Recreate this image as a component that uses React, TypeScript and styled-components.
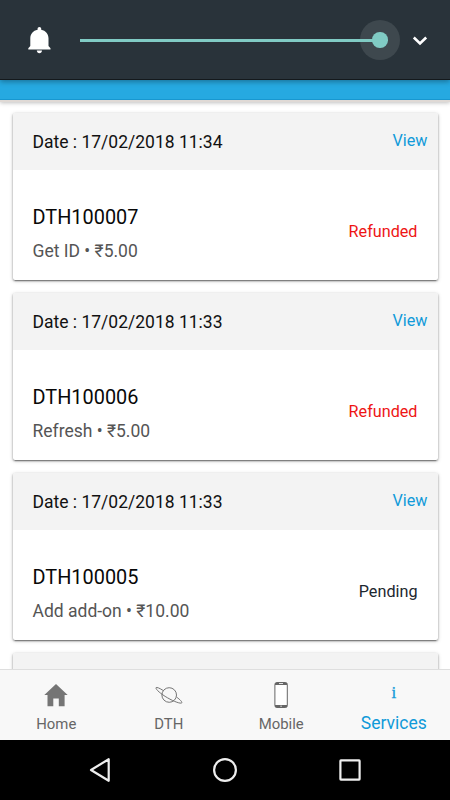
import React from "react";
import styled, { createGlobalStyle } from "styled-components";

const GlobalStyle = createGlobalStyle`
  * { box-sizing: border-box; }
  body { margin: 0; font-family: Roboto, "Noto Sans", sans-serif; background: #fff; }
`;

const Screen = styled.div`
  width: 450px;
  height: 800px;
  display: flex;
  flex-direction: column;
  overflow: hidden;
  background: #fff;
`;

const VolumePanel = styled.div`
  flex: none;
  height: 80px;
  display: flex;
  align-items: center;
  padding-left: 28px;
  background: #29333a;
  border-bottom: 1px solid #14191c;
  box-shadow: 0 2px 5px rgba(0, 0, 0, 0.3);
  z-index: 2;
`;

const BellIcon = styled.svg`
  width: 23px;
  height: 27px;
  margin: 1px 29px 0 0;
`;

const Slider = styled.div`
  display: flex;
  align-items: center;
  width: 320px;
  height: 40px;
  margin-top: 1px;
`;

const Track = styled.div`
  flex: 1;
  height: 3px;
  margin-right: -20px;
  background: #80cbc4;
  z-index: 1;
`;

const Halo = styled.div`
  display: flex;
  align-items: center;
  justify-content: center;
  width: 40px;
  height: 40px;
  border-radius: 50%;
  background: #3e484e;
`;

const Thumb = styled.div`
  width: 15.5px;
  height: 15.5px;
  border-radius: 50%;
  background: #80cbc4;
`;

const ChevronIcon = styled.svg`
  width: 16px;
  height: 12px;
  margin: 3px 0 0 12px;
`;

const AppBar = styled.div`
  flex: none;
  height: 20px;
  background: #26a9e1;
  border-bottom: 1px solid #1897d0;
  box-shadow: 0 2px 0 #dfd9d5, 0 3px 4px rgba(0, 0, 0, 0.25);
  z-index: 1;
`;

const List = styled.main`
  flex: 1;
  min-height: 0;
  overflow: hidden;
  display: flex;
  flex-direction: column;
  gap: 13px;
  padding: 13px 12.5px 0 12.5px;
`;

const Card = styled.article`
  flex: none;
  height: 167px;
  border-radius: 2px;
  background: #fff;
  box-shadow: 0 3px 1px -2px rgba(0, 0, 0, 0.2), 0 1px 2px rgba(0, 0, 0, 0.4),
    0 1px 4px 0 rgba(0, 0, 0, 0.18);
`;

const CardHeader = styled.header`
  display: flex;
  justify-content: space-between;
  height: 57px;
  padding: 0 10px 0 20px;
  line-height: 58px;
  border-radius: 2px 2px 0 0;
  background: #f3f3f3;
`;

const DateText = styled.span`
  font-size: 17.5px;
  color: #111;
`;

const ViewLink = styled.span`
  font-size: 16.2px;
  line-height: 56px;
  color: #109ad9;
`;

const CardBody = styled.div`
  display: flex;
  justify-content: space-between;
  padding: 33px 20px 0 20px;
`;

const OrderId = styled.div`
  font-size: 19.9px;
  line-height: 29px;
  color: #080808;
`;

const Detail = styled.div`
  margin-top: 5px;
  font-size: 17.5px;
  line-height: 28px;
  color: #555;
`;

const Status = styled.div<{ $color: string }>`
  margin-top: 15px;
  font-size: 16.2px;
  line-height: 28px;
  color: ${({ $color }) => $color};
`;

const TabBar = styled.nav`
  flex: none;
  display: grid;
  grid-template-columns: repeat(4, 1fr);
  height: 71px;
  border-top: 1px solid #dedede;
  background: #f8f8f8;
`;

const Tab = styled.div<{ $active?: boolean }>`
  display: flex;
  flex-direction: column;
  align-items: center;
  padding-top: 10px;
  font-size: ${({ $active }) => ($active ? 17.5 : 14.9)}px;
  line-height: 28px;
  color: ${({ $active }) => ($active ? "#109ad9" : "#666")};
`;

const TabIcon = styled.svg`
  width: 30px;
  height: 30px;
`;

const InfoGlyph = styled.div`
  height: 29px;
  font: 17px/26px "Liberation Serif", serif;
  -webkit-text-stroke: 0.3px currentColor;
`;

const SystemBar = styled.footer`
  flex: none;
  display: flex;
  align-items: center;
  justify-content: center;
  gap: 95px;
  height: 60px;
  background: #000;
`;

const SystemIcon = styled.svg`
  width: 30px;
  height: 30px;
  fill: none;
  stroke: #eee;
  stroke-width: 2.2;
  stroke-linejoin: round;
`;

const orders = [
  { date: "17/02/2018 11:34", id: "DTH100007", detail: "Get ID • ₹5.00", status: "Refunded" },
  { date: "17/02/2018 11:33", id: "DTH100006", detail: "Refresh • ₹5.00", status: "Refunded" },
  { date: "17/02/2018 11:33", id: "DTH100005", detail: "Add add-on • ₹10.00", status: "Pending" },
];

const statusColors: Record<string, string> = { Refunded: "#ee1515", Pending: "#1c2730" };

export default function App() {
  return (
    <Screen>
      <GlobalStyle />
      <VolumePanel>
        <BellIcon viewBox="0 0 23 27" fill="#fff">
          <path d="M11.4 0c1 0 1.8.8 1.8 1.8v.9c4.500.9 7.300 4.200 7.300 8.500v7.800l2 2.300v1.200H.3v-1.200L2.300 19v-7.800c0-4.300 2.800-7.600 7.300-8.500V1.800C9.600.8 10.400 0 11.400 0z" />
          <path d="M8.800 23.600H14c0 1.500-1.200 2.700-2.600 2.700s-2.600-1.200-2.600-2.700z" />
        </BellIcon>
        <Slider>
          <Track />
          <Halo>
            <Thumb />
          </Halo>
        </Slider>
        <ChevronIcon viewBox="0 0 16 12" fill="none" stroke="#fff" strokeWidth="2.6">
          <path d="M1.800 2.500 8 8.500 14.200 2.500" />
        </ChevronIcon>
      </VolumePanel>
      <AppBar />
      <List>
        {orders.map((o) => (
          <Card key={o.id}>
            <CardHeader>
              <DateText>Date : {o.date}</DateText>
              <ViewLink>View</ViewLink>
            </CardHeader>
            <CardBody>
              <div>
                <OrderId>{o.id}</OrderId>
                <Detail>{o.detail}</Detail>
              </div>
              <Status $color={statusColors[o.status]}>{o.status}</Status>
            </CardBody>
          </Card>
        ))}
        <Card>
          <CardHeader />
        </Card>
      </List>
      <TabBar>
        <Tab>
          <TabIcon viewBox="0 0 30 30" fill="#757575">
            <path d="M15 4 26.700 15H23.600V26.200H17.800V18.600H12.300V26.200H6.500V15H3.300z" />
          </TabIcon>
          Home
        </Tab>
        <Tab>
          <TabIcon viewBox="0 0 30 30" fill="none" stroke="#666" strokeWidth="0.9">
            <circle cx="15.200" cy="15" r="7.300" />
            <path d="M9.200 10.500C5.500 8.100 2.300 6.800 2 7.800c-.5 1.500 5 6.300 11.500 10 6.500 3.800 13.500 6.300 14.300 5 .5-.9-1.800-3.200-5.200-5.700" />
          </TabIcon>
          DTH
        </Tab>
        <Tab>
          <TabIcon viewBox="0 0 30 30">
            <rect x="8.900" y="2.500" width="12.400" height="25" rx="2" fill="#fff" stroke="#666" />
            <path d="M9 5V4q0-1.500 1.500-1.500h9.200q1.500 0 1.500 1.500v1zM9 25h12.200v1q0 1.500-1.500 1.500h-9.200Q9 27.500 9 26z" fill="#666" />
            <path d="M13 3.500h4M14.300 26.200h1.600" stroke="#fff" strokeWidth=".8" />
          </TabIcon>
          Mobile
        </Tab>
        <Tab $active>
          <InfoGlyph>i</InfoGlyph>
          Services
        </Tab>
      </TabBar>
      <SystemBar>
        <SystemIcon viewBox="0 0 30 30">
          <path d="M23.700 4.200v21.600L6 15z" />
        </SystemIcon>
        <SystemIcon viewBox="0 0 30 30">
          <circle cx="15" cy="15" r="10.900" />
        </SystemIcon>
        <SystemIcon viewBox="0 0 30 30">
          <rect x="5.400" y="5.400" width="19.200" height="19.200" rx=".5" />
        </SystemIcon>
      </SystemBar>
    </Screen>
  );
}
